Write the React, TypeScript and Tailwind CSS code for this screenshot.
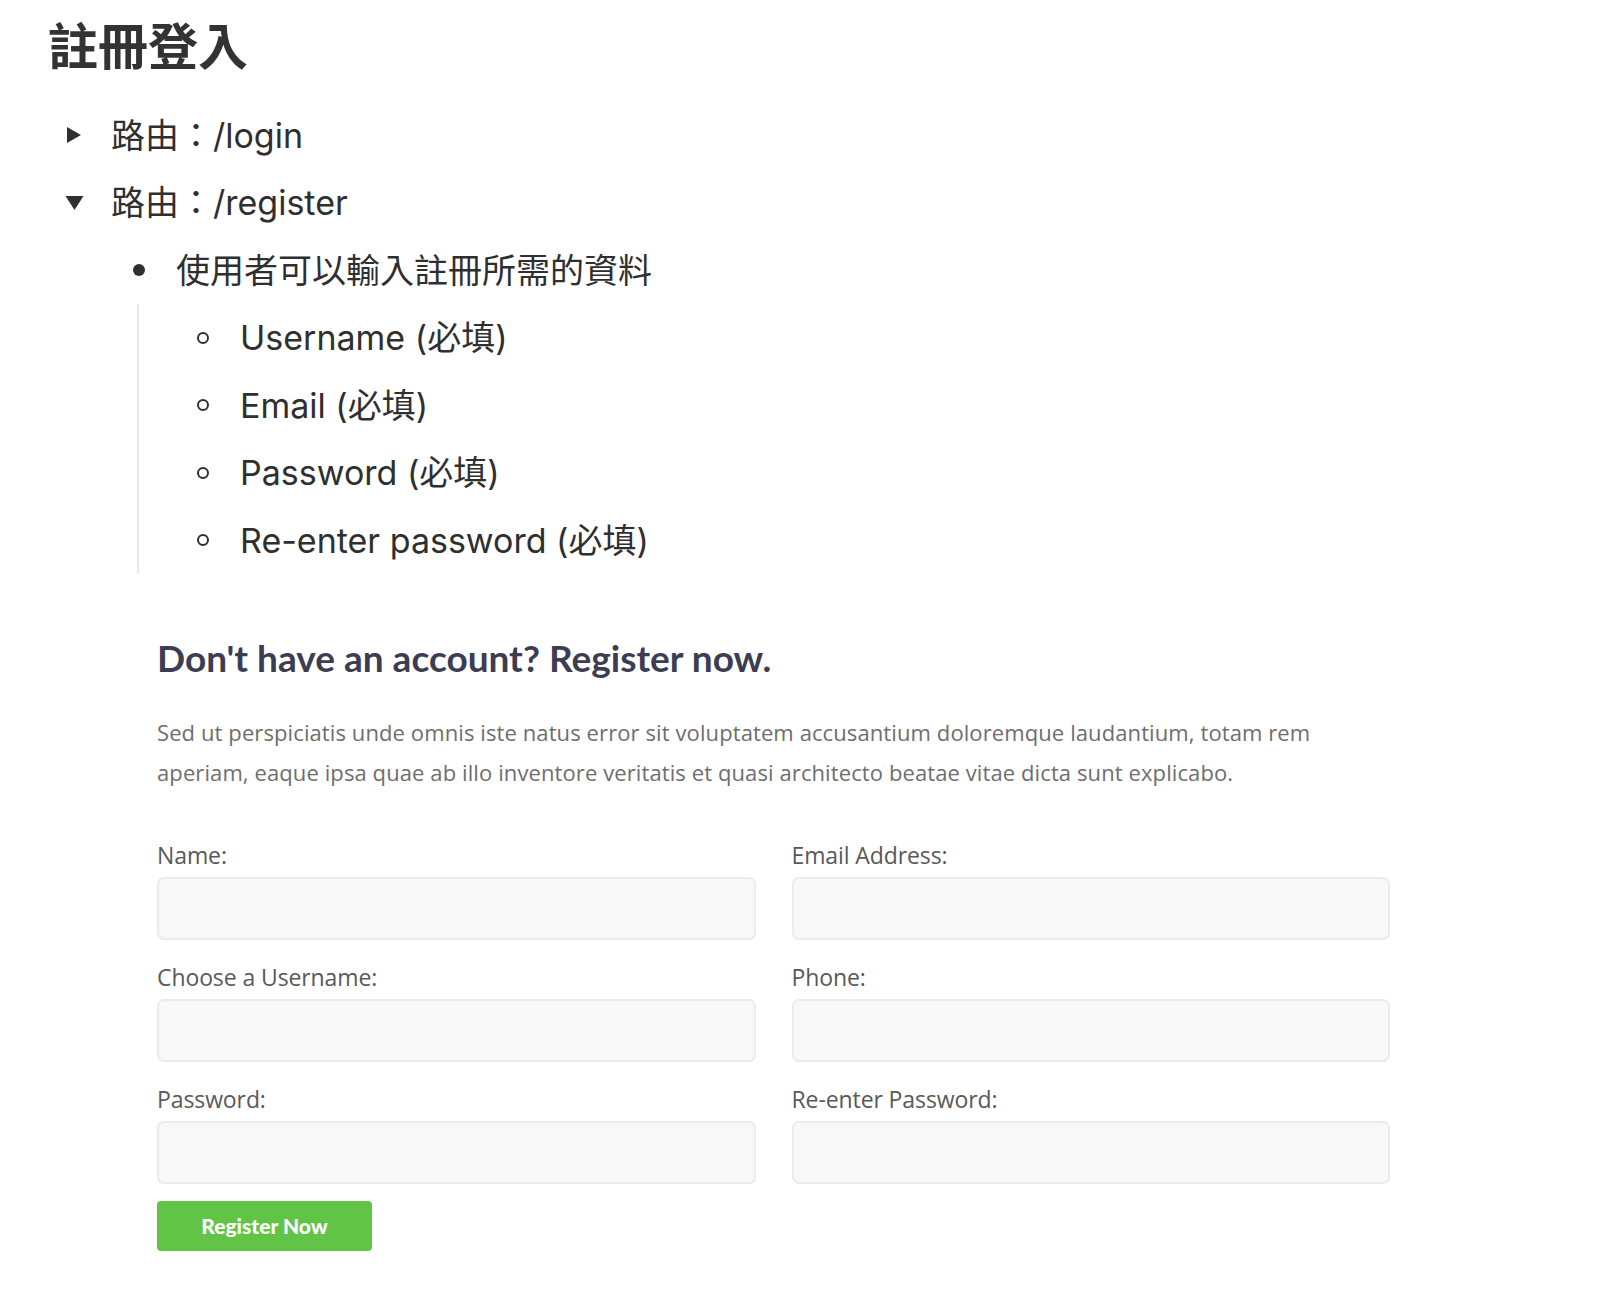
import React from "react";

function RightTri() {
  return (
    <svg width="16" height="18" viewBox="0 0 16 18" className="block">
      <path d="M1 1 L15 9 L1 17 Z" fill="#2f2f2f" />
    </svg>
  );
}

function DownTri() {
  return (
    <svg width="19" height="16" viewBox="0 0 19 16" className="block">
      <path d="M0.5 1 L18.5 1 L9.5 15 Z" fill="#2f2f2f" />
    </svg>
  );
}

function Field({ label }: { label: string }) {
  return (
    <div className="flex flex-col">
      <label className="h-[30px] leading-[30px] text-[23px] text-[#595959] tracking-[-0.1px]">{label}</label>
      <input
        className="mt-[7px] h-[63px] w-full rounded-[7px] border-2 border-[#ebebeb] bg-[#f8f8f8] outline-none"
        type="text"
      />
    </div>
  );
}

export default function App() {
  const nested = ["Username (必填)", "Email (必填)", "Password (必填)", "Re-enter password (必填)"];
  return (
    <div className="min-h-[1292px] w-full bg-white">
      <div className="font-['Inter','Noto_Sans_CJK_TC',sans-serif] text-[#2f2f2f]">
        <div className="h-[101.5px] pl-[48px] pt-[17px]">
          <h1 className="text-[50px] font-bold leading-[60px] text-[#333]">註冊登入</h1>
        </div>
        <div className="text-[34px]">
          <div className="flex h-[67.5px] items-center">
            <div className="ml-[66px] w-[45px]">
              <RightTri />
            </div>
            <span>路由：/login</span>
          </div>
          <div className="flex h-[67.5px] items-center">
            <div className="ml-[65px] w-[46px]">
              <DownTri />
            </div>
            <span>路由：/register</span>
          </div>
          <div className="flex h-[67.5px] items-center">
            <div className="ml-[133px] w-[43px]">
              <div className="h-[12px] w-[12px] rounded-full bg-[#2f2f2f]" />
            </div>
            <span>使用者可以輸入註冊所需的資料</span>
          </div>
          <div className="ml-[137px] border-l-2 border-[#e8e8e8]">
            {nested.map((t) => (
              <div key={t} className="flex h-[67.5px] items-center">
                <div className="ml-[58px] w-[43px]">
                  <div className="h-[12px] w-[12px] rounded-full border-[2.5px] border-[#2f2f2f]" />
                </div>
                <span>{t}</span>
              </div>
            ))}
          </div>
        </div>
      </div>

      <div className="ml-[157px] w-[1233px] pb-[40px]">
        <h2 className="mt-[61px] h-[46px] font-['Lato',sans-serif] text-[37px] font-bold leading-[46px] tracking-[0px] text-[#3c3d52]">
          Don't have an account? Register now.
        </h2>
        <p className="mt-[30.5px] font-['Open_Sans',sans-serif] text-[22px] leading-[40px] tracking-[0.1px] text-[#6e6e6e]">
          Sed ut perspiciatis unde omnis iste natus error sit voluptatem accusantium doloremque laudantium, totam rem
          aperiam, eaque ipsa quae ab illo inventore veritatis et quasi architecto beatae vitae dicta sunt explicabo.
        </p>
        <div className="mt-[48px] grid grid-cols-2 gap-x-[36px] gap-y-[22px] font-['Open_Sans',sans-serif]">
          <Field label="Name:" />
          <Field label="Email Address:" />
          <Field label="Choose a Username:" />
          <Field label="Phone:" />
          <Field label="Password:" />
          <Field label="Re-enter Password:" />
        </div>
        <button className="mt-[17px] h-[50px] w-[215px] rounded-[4px] bg-[#62c446] font-['Lato',sans-serif] text-[21px] font-black text-white">
          Register Now
        </button>
      </div>
    </div>
  );
}
